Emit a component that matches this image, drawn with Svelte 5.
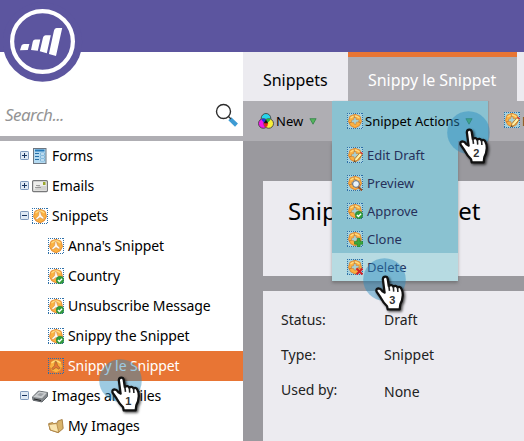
<script>
  const tree = [
    { label: 'Forms', icon: 'form', toggle: '+' },
    { label: 'Emails', icon: 'mail', toggle: '+' },
    { label: 'Snippets', icon: 'snip', toggle: '-' },
    { label: "Anna's Snippet", icon: 'snip', child: true },
    { label: 'Country', icon: 'snip', badge: 'check', child: true },
    { label: 'Unsubscribe Message', icon: 'snip', badge: 'check', child: true },
    { label: 'Snippy the Snippet', icon: 'snip', badge: 'check', child: true },
    { label: 'Snippy le Snippet', icon: 'snip', child: true, selected: true },
    { label: 'Images and Files', icon: 'disk', toggle: '-' },
    { label: 'My Images', icon: 'folder', child: true }
  ];
  const actions = [
    { label: 'Edit Draft', badge: 'pencil' },
    { label: 'Preview', badge: 'lens' },
    { label: 'Approve', badge: 'check' },
    { label: 'Clone', badge: 'plus' },
    { label: 'Delete', badge: 'cross' }
  ];
  const details = [
    ['Status:', 'Draft'],
    ['Type:', 'Snippet'],
    ['Used by:', 'None']
  ];
  const steps = [
    { n: 1, x: 99, y: 359 },
    { n: 2, x: 447, y: 111 },
    { n: 3, x: 363, y: 258 }
  ];
</script>

{#snippet snip(badge, selected, menu)}
  <svg class="icon" width="16" height="16" viewBox="0 0 16 16">
    <rect width="16" height="16" fill={selected ? '#e87534' : menu ? '#a5d2de' : '#fff'} />
    <path d="M0 .5h16M0 15.500h16M.5 0v16M15.500 0v16" stroke="#2d6fa8" stroke-dasharray="1 1" shape-rendering="crispEdges" />
    <path d="M3 3.200 8 1.300 13 3.200 14.500 8.500 12.300 12.700 8 14.900 3.700 12.700 1.500 8.500Z" fill="#fbb040" stroke="#e0862a" stroke-width=".9" />
    <path d="M3.500 5Q8 1 12.500 5" fill="none" stroke="#ffdc80" stroke-width="1.200" />
    {#if menu}
      <path d="M7 4.500h2v2l3 .2v2.200L9.300 9.200 9 11.500 7 11 6.700 9.400 4.500 9.500V7.300L6.700 6.700Z" fill="#a7d2d7" stroke="#c98b45" stroke-width=".7" />
      <path d="m7 2 .5 2.500M2 10l2.500-.7M11.500 8.800l2.300 1" stroke="#b8712f" stroke-width=".8" />
    {:else}
      <path d="M7.200 3.200 8.400 3.600 9.500 7.200 12.200 10 11 11.200 8 9.500 5 11.700 3.700 10.500 6.500 7.700Z" fill={selected ? '#e87534' : '#fffaf0'} stroke={selected ? '#8a5a2c' : '#d08a48'} stroke-width=".6" />
    {/if}
    {#if badge === 'check'}
      <circle cx="12" cy="12" r="3.800" fill="#319d3d" stroke="#1f7d2d" stroke-width=".5" />
      <path d="m9.900 12 1.500 1.500L14.100 10.700" fill="none" stroke="#fff" stroke-width="1.300" />
    {:else if badge === 'pencil'}
      <path d="m7 14.500 1-3L13 5.700l2.300 1.800-5.200 6Z" fill="#fff1a5" stroke="#a86c28" stroke-width=".8" />
      <path d="m13 5.700 1-1 2 1.600-.9 1.200Z" fill="#d63232" />
      <path d="m7 15 .6-1.800 1.200 1Z" fill="#333" />
    {:else if badge === 'lens'}
      <path d="m11 11.500 4 4" stroke="#9a5427" stroke-width="2" />
      <circle cx="9" cy="9" r="3.400" fill="#e8f4fb" stroke="#626a75" />
    {:else if badge === 'plus'}
      <path d="M10.300 7.500h2.800v2.900H16v2.800h-2.900V16h-2.800v-2.800H7.500v-2.800h2.800Z" fill="#39a83c" stroke="#1b7826" stroke-width=".6" />
    {:else if badge === 'cross'}
      <path d="m9.500 9.500 6 6m0-6-6 6" stroke="#d12229" stroke-width="2" />
    {/if}
  </svg>
{/snippet}

{#snippet caret()}
  <svg class="caret" width="8" height="7" viewBox="0 0 8 7"><path d="M.9.700h6.200L4 6.200Z" fill="#54b55c" stroke="#328348" stroke-width=".8" /></svg>
{/snippet}

<div class="app">
  <header></header>
  <div class="body">
    <aside>
      <div class="search">
        <span>Search...</span>
        <svg width="24" height="24" viewBox="0 0 24 24">
          <path d="m14.800 15.800 6.700 6.300" stroke="#3e9bd4" stroke-width="4.200" />
          <path d="m13 13 3 3" stroke="#333" stroke-width="1.300" />
          <circle cx="8.500" cy="8.500" r="7" fill="#fff" stroke="#2c2c2c" stroke-width="1.400" />
        </svg>
      </div>
      <div class="tree">
        {#each tree as item}
          <div class="row" class:child={item.child} class:selected={item.selected}>
            {#if item.toggle}
              <svg class="toggle" width="9" height="9" viewBox="0 0 9 9">
                <rect x=".5" y=".5" width="8" height="8" rx=".7" fill="#dfe9f4" stroke="#7e98ba" />
                <path d={item.toggle === '+' ? 'M2 4.500h5M4.500 2v5' : 'M2 4.500h5'} stroke="#17335e" />
              </svg>
            {/if}
            {#if item.icon === 'snip'}
              {@render snip(item.badge, item.selected, false)}
            {:else}
              <svg class="icon" width="16" height="16" viewBox="0 0 16 16">
                {#if item.icon === 'form'}
                  <rect x="1.500" y=".5" width="12.500" height="15" fill="#b4daf1" stroke="#6d7680" />
                  <path d="M3 2.500h9.500" stroke="#2478b8" stroke-width="2" />
                  <path d="M3 5.500h4M3 8.500h4M3 11.500h4" stroke="#2670a8" />
                  <path d="M8.500 5h4v2h-4ZM8.500 8h4v2h-4ZM8.500 11h4v2h-4Z" fill="#e4f4ff" stroke="#5d9fc9" stroke-width=".6" />
                {:else if item.icon === 'mail'}
                  <rect x=".6" y="2.600" width="14.800" height="11" rx="1" fill="#eeeeec" stroke="#77787a" stroke-width="1.200" />
                  <path d="M2 12 6 8h8v4.500H2Z" fill="#d2d2d0" />
                  <path d="M3 9.500h6M4 7.500h4" stroke="#888" stroke-width=".8" />
                  <rect x="11" y="4" width="2.500" height="3" fill="#9aa72c" />
                {:else if item.icon === 'disk'}
                  <path d="m.5 9 6-6 9 1.500v4L10 14 1 12.200Z" fill="#83878b" stroke="#4e5358" stroke-width=".8" />
                  <path d="m1 9 6-5.500 8 1.200-5 5.500Z" fill="#c9ccce" />
                  <path d="m5 7 3-2 4 .7-3 2.600Z" fill="#9da1a5" />
                  <path d="m2 11 7 1.500" stroke="#222" />
                {:else}
                  <path d="m.7 5.500 4-1 1 1.200 4-1V3l4.500-1.500 1 9-5 4.200L2 12Z" fill="#d9b46c" stroke="#9c7030" stroke-width=".8" />
                  <path d="m.7 6.500 8-1 2 9L2.500 12Z" fill="#fae5b0" stroke="#a87b38" stroke-width=".7" />
                {/if}
              </svg>
            {/if}
            <span>{item.label}</span>
          </div>
        {/each}
      </div>
    </aside>
    <main>
      <nav>
        <div class="tab">Snippets</div>
        <div class="tab active">Snippy le Snippet</div>
      </nav>
      <div class="toolbar">
        <div class="new">
          <svg width="16" height="16" viewBox="0 0 16 16" stroke="#444" stroke-width=".9">
            <circle cx="8" cy="5.300" r="4.800" fill="#27d5ea" />
            <circle cx="5.300" cy="10.500" r="4.800" fill="#f018e8" />
            <circle cx="10.700" cy="10.500" r="4.800" fill="#f8ee38" />
            <path d="M3.600 6.300Q5.500 5 8 6.500L6.700 9.800Q4.200 9 3.600 6.300Z" fill="#173be0" stroke="none" />
            <path d="M12.400 6.300Q10.500 5 8 6.500L9.300 9.800Q12 9 12.400 6.300Z" fill="#25b93c" stroke="none" />
            <path d="M6 10h4q0 3-2 4.300Q6 13 6 10Z" fill="#e72020" stroke="none" />
            <path d="m8 6.500 2.300 3.800H5.700Z" fill="#111" stroke="none" />
          </svg>
          <span>New</span>
          {@render caret()}
        </div>
        <div class="more">{@render snip('pencil', false, true)}<span>Edit Draft</span></div>
      </div>
      <section class="title"><h1>Snippy le Snippet</h1></section>
      <section class="details">
        {#each details as [name, value]}
          <div class="detail"><span>{name}</span><span>{value}</span></div>
        {/each}
      </section>
    </main>
  </div>

  <div class="menu">
    <div class="head">{@render snip('', false, true)}<span>Snippet Actions</span>{@render caret()}</div>
    <div class="list">
      {#each actions as action}
        <div class="action" class:hover={action.label === 'Delete'}>
          {@render snip(action.badge, false, true)}<span>{action.label}</span>
        </div>
      {/each}
    </div>
  </div>

  <svg class="logo" width="80" height="82" viewBox="0 0 80 82">
    <circle cx="39.500" cy="42" r="39.700" fill="#5c559f" />
    <circle cx="39.500" cy="41.500" r="30.400" fill="none" stroke="#fff" stroke-width="4.200" />
    <path d="M17 50.200 18.500 45.500Q19.200 44 21 44H26.400L24.800 49.900Z M28 50 29.800 41.500Q30.300 39.500 32.300 39.500H37.300L34.800 50.700Z M36.800 51.200 40 37.500Q40.500 35.400 42.500 35.200H47.800L43.800 53.200Z M45.900 53.900 51 30.500Q51.500 28.200 53.500 28.100H59.200L53 55.900Z" fill="#fff" />
  </svg>

  {#each steps as step}
    <svg class="step" style="left:{step.x}px;top:{step.y}px" width="56" height="66" viewBox="0 0 56 66">
      <circle cx="21.500" cy="21.500" r="21.300" fill="#2a8cc0" fill-opacity=".46" />
      <g class="hand" transform="translate(12.500 17.500) scale(.35)">
        <path d="M21 11Q21 3 28 3Q34 3 35 10L38 30Q46 24 51 32Q58 26 63 34Q70 30 74 38Q78 44 78 56Q77 72 71 82L69 97H35L33 88Q22 77 14 62L3 46Q1 38 8 37Q14 37 20 45L26 49Z" fill="#fff" stroke="#111" stroke-width="6.500" stroke-linejoin="round" />
        <path d="m38 28 2 16M51 32l1 14M63 34l1 13" stroke="#222" stroke-width="4.500" />
      </g>
      <text x="29.300" y="45.500" text-anchor="middle">{step.n}</text>
    </svg>
  {/each}
</div>

<style>
  :global(body) { margin: 0; }
  .app { position: relative; width: 524px; height: 441px; overflow: hidden; display: flex; flex-direction: column; background: #fff; font: 15px 'Noto Sans', sans-serif; color: #000; }
  svg { display: block; flex: none; }
  span { white-space: nowrap; }
  header { height: 52px; background: #5c559f; flex: none; }
  .body { display: flex; flex: 1; min-height: 0; }
  aside { width: 243px; flex: none; }
  .search { box-sizing: border-box; height: 89px; padding: 52px 4px 0 5px; border-bottom: 5px solid #afaeb3; display: flex; justify-content: space-between; align-items: flex-start; }
  .search span { font-size: 17px; letter-spacing: -.55px; line-height: 22px; font-style: italic; color: #949494; }
  .search svg { margin-top: -1px; }
  .row { box-sizing: border-box; height: 30px; display: flex; align-items: center; padding: 0 0 2px 20px; font-size: 14px; letter-spacing: -.08px; }
  .tree .icon { margin-top: 1px; }
  .toggle { margin-right: 3px; }
  .row .icon { margin-right: 4px; }
  .row.child { padding-left: 48px; }
  .selected { background: #e87534; color: #fff; }
  main { flex: 1; min-width: 0; background: #9a999e; display: flex; flex-direction: column; }
  nav { height: 49px; flex: none; display: flex; background: #ecebf0; }
  .tab { box-sizing: border-box; width: 105px; padding: 5px 0 0 20px; line-height: 46px; font-size: 16px; letter-spacing: -.05px; white-space: nowrap; }
  .active { width: 169px; border-top: 5px solid #e87534; padding-top: 0; background: #afaeb3; color: #fff; }
  .toolbar { height: 40px; flex: none; display: flex; align-items: center; background: #afaeb3; padding-left: 15px; font-size: 13px; overflow: hidden; }
  .new { display: flex; align-items: center; width: 246px; flex: none; }
  .new span { margin: 0 6px 0 2px; }
  .more { display: flex; gap: 2px; color: #6b4421; }
  section { margin-left: 20px; background: #ecebf0; }
  .title { box-sizing: border-box; height: 95px; margin-top: 40px; padding: 12px 0 0 25px; flex: none; }
  h1 { margin: 0; font-size: 24px; letter-spacing: -.08px; line-height: 36px; font-weight: 400; white-space: nowrap; }
  .details { margin-top: 15px; flex: 1; padding: 11px 0 0 18px; color: #222; font-size: 14px; }
  .detail { display: flex; height: 35px; line-height: 36px; }
  .detail span:first-child { width: 103px; }
  .detail:last-child span:last-child { padding-top: 2px; }
  .menu { position: absolute; left: 332px; top: 101px; width: 156px; }
  .head { height: 40px; background: #8ac2d1; display: flex; align-items: center; padding-left: 15px; font-size: 13px; box-sizing: border-box; box-shadow: 1px 0 1px #8888; }
  .head span { margin: 0 5px 0 2px; }
  .list { position: relative; width: 126px; background: #8ac2d1; color: #27315b; font-size: 13px; box-shadow: 0 2px 3px #5558; clip-path: inset(0 -6px -8px -6px); }
  .action { height: 28px; display: flex; align-items: center; gap: 4px; padding-left: 15px; }
  .hover { background: #b7dbe2; }
  .logo { position: absolute; left: 3px; top: 0; }
  .step { position: absolute; }
  .hand { filter: drop-shadow(4px 4px 3px #000a); }
  .step text { font: bold 11px 'Liberation Sans', sans-serif; fill: #333; }
</style>
